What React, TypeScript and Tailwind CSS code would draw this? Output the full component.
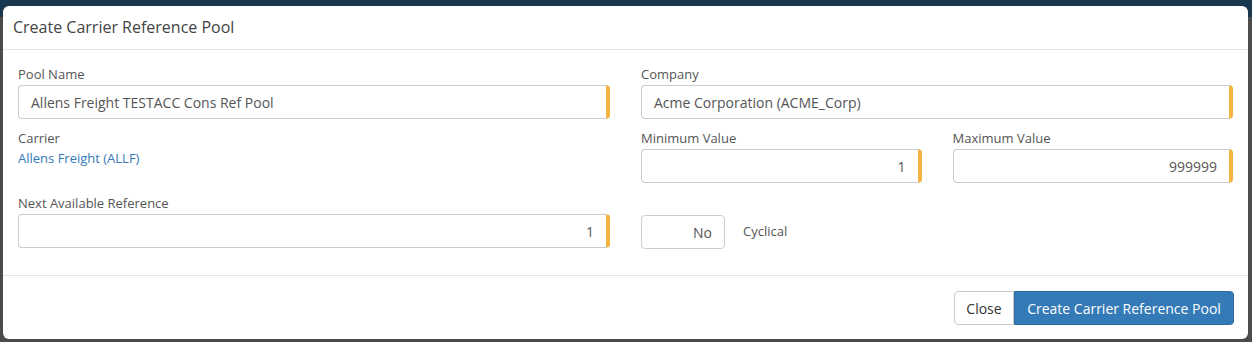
import React from "react";

const font = { fontFamily: '"Open Sans", "Liberation Sans", sans-serif' };

function Label({ children }: { children: React.ReactNode }) {
  return <div className="text-[13px] leading-[18px] text-[#555] mb-[2px]">{children}</div>;
}

function Input({ value, right = false, yellow = true }: { value: string; right?: boolean; yellow?: boolean }) {
  return (
    <div
      className={
        "h-[34px] flex items-center px-3 rounded-[4px] border border-[#ccc] bg-white text-[14px] text-[#555] " +
        (yellow ? "border-r-4 border-r-[#f3b53f] " : "") +
        (right ? "justify-end" : "justify-start")
      }
    >
      {value}
    </div>
  );
}

export default function App() {
  return (
    <div className="relative w-full h-[342px] bg-[#4b4b4b] overflow-hidden" style={font}>
      <div className="absolute top-0 left-0 right-0 h-[17px] bg-[#1a3750]" />
      <div className="relative z-10 ml-[3px] mt-[6px] w-[1245px] rounded-[6px] bg-white">
        <div className="px-[10px] pt-[10px] pb-[11px] border-b border-[#e5e5e5]">
          <div className="text-[16px] leading-[22px] text-[#444]">Create Carrier Reference Pool</div>
        </div>
        <div className="px-[15px] pt-[15px] pb-[27px] flex flex-col">
          <div className="grid grid-cols-2 gap-x-[31px] mb-[10px]">
            <div>
              <Label>Pool Name</Label>
              <Input value="Allens Freight TESTACC Cons Ref Pool" />
            </div>
            <div>
              <Label>Company</Label>
              <Input value="Acme Corporation (ACME_Corp)" />
            </div>
          </div>
          <div className="grid grid-cols-2 gap-x-[31px] mb-[11px]">
            <div>
              <Label>Carrier</Label>
              <div className="text-[13px] leading-[18px] text-[#337ab7]">Allens Freight (ALLF)</div>
            </div>
            <div className="grid grid-cols-2 gap-x-[31px]">
              <div>
                <Label>Minimum Value</Label>
                <Input value="1" right />
              </div>
              <div>
                <Label>Maximum Value</Label>
                <Input value="999999" right />
              </div>
            </div>
          </div>
          <div className="grid grid-cols-2 gap-x-[31px]">
            <div>
              <Label>Next Available Reference</Label>
              <Input value="1" right />
            </div>
            <div className="flex items-end">
              <div className="flex items-center gap-[18px] mb-[-1px]">
                <div className="w-[84px] h-[34px] flex items-center justify-end px-3 rounded-[4px] border border-[#ccc] text-[14px] text-[#555]">
                  No
                </div>
                <div className="text-[13px] text-[#555]">Cyclical</div>
              </div>
            </div>
          </div>
        </div>
        <div className="border-t border-[#e5e5e5] px-[14px] pt-[15px] pb-[14px] flex justify-end">
          <button className="h-[34px] w-[60px] border border-[#ccc] rounded-l-[4px] text-[14px] text-[#333] bg-white">
            Close
          </button>
          <button className="h-[34px] px-[12px] w-[220px] border border-[#2e6da4] rounded-r-[4px] text-[14px] text-white bg-[#337ab7]">
            Create Carrier Reference Pool
          </button>
        </div>
      </div>
    </div>
  );
}
